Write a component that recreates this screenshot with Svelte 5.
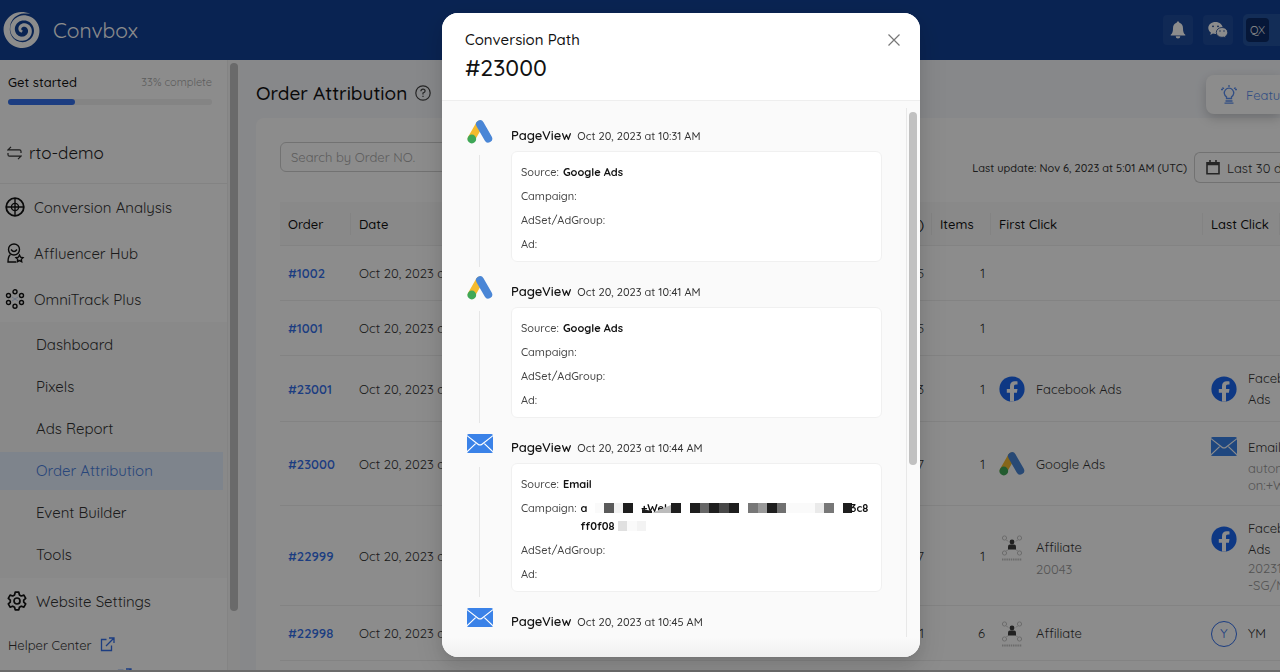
<script>
  const menu = [
    { label: 'Conversion Analysis', icon: 'target' },
    { label: 'Affluencer Hub', icon: 'person' },
    { label: 'OmniTrack Plus', icon: 'dots' },
  ]
  const submenu = ['Dashboard', 'Pixels', 'Ads Report', 'Order Attribution', 'Event Builder', 'Tools']

  const orders = [
    { id: '#1002', total: '5', items: 1 },
    { id: '#1001', total: '5', items: 1 },
    {
      id: '#23001', total: '3', items: 1,
      first: { icon: 'facebook', name: ['Facebook Ads'] },
      last: { icon: 'facebook', name: ['Facebook', 'Ads'] },
    },
    {
      id: '#23000', total: '7', items: 1,
      first: { icon: 'google', name: ['Google Ads'] },
      last: { icon: 'email', name: ['Email'], sub: ['automati', 'on:+Wel'] },
    },
    {
      id: '#22999', total: '7', items: 1,
      first: { icon: 'affiliate', name: ['Affiliate'], sub: ['20043'] },
      last: { icon: 'facebook', name: ['Facebook', 'Ads'], sub: ['20231', '-SG/MY'] },
    },
    {
      id: '#22998', total: '1', items: 6,
      first: { icon: 'affiliate', name: ['Affiliate'] },
      last: { icon: 'letter', name: ['YM'] },
    },
  ]

  const steps = [
    { icon: 'google', time: 'Oct 20, 2023 at 10:31 AM', source: 'Google Ads' },
    { icon: 'google', time: 'Oct 20, 2023 at 10:41 AM', source: 'Google Ads' },
    { icon: 'email', time: 'Oct 20, 2023 at 10:44 AM', source: 'Email', masked: true },
    { icon: 'email', time: 'Oct 20, 2023 at 10:45 AM', source: 'Email' },
  ]

  // [x, width, colour] of each tile that hides part of the campaign name
  const tiles = [
    [4, 9, '#fafafa'], [13, 10, '#5a5a5a'], [23, 9, '#f2f2f2'], [32, 10, '#1e1e1e'],
    [80, 10, '#1e1e1e'], [99, 10, '#1e1e1e'], [109, 9, '#666'], [118, 10, '#1e1e1e'],
    [128, 10, '#484848'], [138, 10, '#1e1e1e'], [157, 10, '#777'], [167, 9, '#999'],
    [176, 10, '#1e1e1e'], [186, 9, '#707070'], [195, 29, '#fafafa'], [224, 9, '#eaeaea'],
    [233, 10, '#777'], [252, 9, '#1e1e1e'],
  ]

  // logo: one band that winds inwards and gets thinner
  function spiral() {
    const outer = []
    const inner = []
    for (let i = 0; i <= 120; i++) {
      const t = i / 120
      const a = -1.15 - t * 2.5 * 2 * Math.PI
      const r = 17.4 - 16 * Math.pow(t, 1.3)
      const w = Math.min(6.8, t * 60) * (1 - 0.6 * t)
      outer.push([20 + (r + w / 2) * Math.cos(a), 20 + (r + w / 2) * Math.sin(a)])
      inner.unshift([20 + (r - w / 2) * Math.cos(a), 20 + (r - w / 2) * Math.sin(a)])
    }
    return 'M' + [...outer, ...inner].map((p) => p.map((n) => n.toFixed(2)).join(' ')).join('L') + 'Z'
  }
</script>

{#snippet channel(name)}
  {#if name === 'google'}
    <svg class="ch" viewBox="0 0 26 26" aria-hidden="true">
      <path d="M12.6 5.4 4.6 19.4" stroke="#f5bb2e" stroke-width="7.6" stroke-linecap="round" />
      <path d="M13 5.2 21.2 19.6" stroke="#4a86d6" stroke-width="8" stroke-linecap="round" />
      <circle cx="4.8" cy="20" r="4.4" fill="#3fa757" />
    </svg>
  {:else if name === 'email'}
    <svg class="ch" viewBox="0 0 26 26" aria-hidden="true">
      <rect x="0" y="3" width="26" height="19" rx="1.6" fill="#3a82e8" />
      <path d="M0 4.600 11 13.200q2 1.500 4 0L26 4.600M0 20.800 8.600 12.600M26 20.800 17.400 12.600" fill="none" stroke="#fff" stroke-width="1.200" />
    </svg>
  {:else if name === 'facebook'}
    <svg class="ch" viewBox="0 0 26 26" aria-hidden="true">
      <circle cx="13" cy="13" r="12.6" fill="#1a66f0" />
      <path d="M11 25.6v-8.9H7.8V13H11v-2.8c0-3.2 1.9-4.9 4.8-4.9 1.4 0 2.7.2 2.7.2v3.1H17c-1.6 0-2 .9-2 1.9V13h3.5l-.6 3.7H15v8.9z" fill="#fff" />
    </svg>
  {:else if name === 'affiliate'}
    <svg class="ch" viewBox="0 0 26 26" aria-hidden="true">
      <g fill="none" stroke="#c4c4c4" stroke-width="1">
        <circle cx="5.5" cy="3" r="2.1" /><circle cx="20.5" cy="3" r="2.1" />
        <circle cx="5.5" cy="18" r="2.1" /><circle cx="20.5" cy="18" r="2.1" />
        <path d="M7.5 5 9 6.500M18.5 5 17 6.500M7.500 16 9 14.500M18.500 16 17 14.500" />
        <path d="M3 24.500h20" stroke-width="2" stroke-dasharray="1.500 .7" />
      </g>
      <circle cx="13" cy="7" r="2.400" fill="#3c3c3c" />
      <path d="M9 14.500v-3q0-2 2-2h4q2 0 2 2v3z" fill="#3c3c3c" />
    </svg>
  {:else}
    <span class="ch letter">Y</span>
  {/if}
{/snippet}

{#snippet external()}
  <svg width="15" height="15" viewBox="0 0 15 15" fill="none" stroke="currentColor" stroke-width="1.3" aria-hidden="true">
    <path d="M6.5 2.500H1.500v11h10V8.500M9 1h5v5M14 1 6 9" />
  </svg>
{/snippet}

{#snippet click(c)}
  {#if c}
    <div class="click">
      {@render channel(c.icon)}
      <div>{#each c.name as line}<div>{line}</div>{/each}</div>
      {#if c.sub}
        <div class="sub">{#each c.sub as line}<div>{line}</div>{/each}</div>
      {/if}
    </div>
  {/if}
{/snippet}

<div class="page">
  <header class="topbar">
    <a class="brand" href="#home">
      <svg width="40" height="40" viewBox="0 0 40 40" aria-hidden="true"><path d={spiral()} fill="#fff" /></svg>
      Convbox
    </a>
    <div class="tools">
      <button class="tool" aria-label="Notifications">
        <svg width="18" height="18" viewBox="0 0 18 18" fill="#fff" aria-hidden="true">
          <path d="M9 .6c.8 0 1.3.5 1.3 1.2C12.8 2.500 14 4.600 14 7.200c0 3.500.6 5 2.300 6.600v.7H1.700v-.7C3.400 12.200 4 10.700 4 7.200c0-2.600 1.200-4.700 3.700-5.400C7.700 1.100 8.200.6 9 .6zM6.700 15.300h4.600a2.300 2.300 0 0 1-4.600 0z" />
        </svg>
      </button>
      <button class="tool" aria-label="WeChat">
        <svg width="20" height="18" viewBox="0 0 20 18" aria-hidden="true">
          <path d="M7.5 1C3.500 1 .3 3.600.3 7c0 1.900 1 3.500 2.600 4.600L2.300 14l2.600-1.400c.8.300 1.700.4 2.600.4 4 0 7.200-2.700 7.200-6S11.500 1 7.500 1z" fill="#fff" />
          <path d="M14 6.500c-3.200 0-5.700 2.200-5.700 4.900s2.500 4.900 5.700 4.900c.7 0 1.400-.1 2-.3l2 1.100-.5-1.900c1.400-.9 2.200-2.300 2.200-3.800 0-2.700-2.500-4.900-5.700-4.900z" fill="#fff" stroke="#17418f" stroke-width=".8" />
          <g fill="#17418f"><circle cx="5" cy="5.300" r=".9" /><circle cx="10" cy="5.300" r=".9" /><circle cx="12" cy="10" r=".7" /><circle cx="16" cy="10" r=".7" /></g>
        </svg>
      </button>
      <button class="user"><span>QX</span></button>
    </div>
  </header>

  <div class="body">
    <aside class="side">
      <nav class="side-content">
        <div class="start">
          <div class="start-head"><b>Get started</b><span>33% complete</span></div>
          <div class="bar" role="progressbar" aria-valuenow="33" aria-label="Get started"><i></i></div>
        </div>
        <button class="site">
          <svg width="15" height="14" viewBox="0 0 15 14" fill="none" stroke="#333" stroke-width="1.2" aria-hidden="true">
            <path d="M4 .8 1 3.800h11.500q1.500 0 1.500 1.500V7M11 13.200l3-3H2.500Q1 10.200 1 8.700V7" />
          </svg>
          rto-demo
        </button>
        {#each menu as m}
          <a class="item" href="#menu">
            <svg width="20" height="20" viewBox="0 0 20 20" fill="none" stroke="#111" stroke-width="1.4" aria-hidden="true">
              {#if m.icon === 'target'}
                <circle cx="10" cy="10" r="8.8" stroke-width="1.800" /><circle cx="10" cy="10" r="3.600" />
                <path d="M10 1v18M1 10h18" />
              {:else if m.icon === 'person'}
                <circle cx="9" cy="6.500" r="5.500" /><path d="M6 6.500q3 4 6 0M5.500 11.500Q3 13.500 3 19h8" />
                <path d="m14.500 12 1.100 2.200 2.400.4-1.700 1.700.4 2.400-2.200-1.100-2.200 1.100.4-2.400-1.700-1.700 2.400-.4z" />
              {:else}
                <circle cx="10" cy="2.800" r="2" /><circle cx="10" cy="17.200" r="2" />
                <circle cx="3.500" cy="6.500" r="2" /><circle cx="16.500" cy="6.500" r="2" />
                <circle cx="3.500" cy="13.500" r="2" /><circle cx="16.500" cy="13.500" r="2" />
                <path d="M7 8l6 4M7 12l6-4" stroke="#b9cdf0" stroke-width=".8" />
              {/if}
            </svg>
            {m.label}
          </a>
        {/each}
        <div class="submenu">
          {#each submenu as s}
            <a href="#sub" class:active={s === 'Order Attribution'}>{s}</a>
          {/each}
        </div>
        <a class="item settings" href="#settings">
          <svg width="20" height="20" viewBox="0 0 20 20" fill="none" stroke="#111" stroke-width="1.7" stroke-linejoin="round" aria-hidden="true">
            <path d="M8.200 1.200h3.600l.6 2.700 1.900 1.100 2.600-.9 1.800 3.200-2 1.800v2l2 1.800-1.800 3.200-2.600-.9-1.900 1.100-.6 2.600H8.200l-.6-2.600-1.900-1.100-2.600.9-1.800-3.200 2-1.800v-2l-2-1.800 1.800-3.200 2.600.9 1.900-1.100z" />
            <circle cx="10" cy="10" r="3" />
          </svg>
          Website Settings
        </a>
        <a class="help" href="#help">Helper Center {@render external()}</a>
        <a class="help more" href="#more" aria-label="More help">{@render external()}</a>
      </nav>
      <div class="track"><div class="thumb"></div></div>
    </aside>

    <main>
      <div class="title-row">
        <h1>Order Attribution</h1>
        <svg width="16" height="16" viewBox="0 0 16 16" fill="none" stroke="#444" stroke-width="1.2" aria-hidden="true">
          <circle cx="8" cy="8" r="7.2" /><path d="M5.900 6.300q0-2.200 2.100-2.200t2.100 1.900Q10.100 7.300 8 8v1.500M8 10.700v1.400" />
        </svg>
        <button class="feature">
          <svg width="16" height="19" viewBox="0 0 16 19" fill="none" stroke="currentColor" stroke-width="1.3" aria-hidden="true">
            <path d="M5.500 13.500v-1.600a4.700 4.700 0 1 1 5 0v1.600zM4.500 16h7M3.500 18.200h9M8 0v2M1.500 2.500l1.400 1.400M14.500 2.500l-1.400 1.400M0 4.500h2M14 4.500h2" />
          </svg>
          Feature Request
        </button>
      </div>
      <section class="card">
        <div class="filters">
          <input type="text" placeholder="Search by Order NO." aria-label="Search by Order NO." />
          <div class="period">
            <span class="update">Last update: Nov 6, 2023 at 5:01 AM (UTC)</span>
            <button class="range">
              <svg width="14" height="15" viewBox="0 0 14 15" fill="none" stroke="#444" stroke-width="1.6" aria-hidden="true">
                <path d="M1 2.800h12v11H1zM4 0v3M10 0v3" /><path d="M1 4h12" stroke-width="2.400" />
              </svg>
              Last 30 days
            </button>
          </div>
        </div>
        <table>
          <colgroup><col class="c-order" /><col /><col class="c-total" /><col class="c-items" /><col class="c-first" /><col class="c-last" /></colgroup>
          <thead>
            <tr><th>Order</th><th>Date</th><th class="num">Total (USD)</th><th>Items</th><th>First Click</th><th>Last Click</th></tr>
          </thead>
          <tbody>
            {#each orders as o}
              <tr>
                <td><a href="#order">{o.id}</a></td>
                <td>Oct 20, 2023 at 10:45 AM</td>
                <td class="num">{o.total}</td>
                <td class="num items">{o.items}</td>
                <td>{@render click(o.first)}</td>
                <td>{@render click(o.last)}</td>
              </tr>
            {/each}
          </tbody>
        </table>
      </section>
    </main>
  </div>
</div>

<div class="mask">
  <div class="modal" role="dialog" aria-modal="true" aria-labelledby="path-title">
    <div class="modal-head">
      <div>
        <h2 id="path-title">Conversion Path</h2>
        <p>#23000</p>
      </div>
      <button aria-label="Close">
        <svg width="12" height="12" viewBox="0 0 12 12" stroke="#777" stroke-width="1.2" aria-hidden="true"><path d="M.5.5l11 11M11.5.5l-11 11" /></svg>
      </button>
    </div>
    <div class="modal-body">
      <ol>
        {#each steps as s}
          <li>
            <div class="mark">{@render channel(s.icon)}</div>
            <div class="step">
              <div class="step-head"><b>PageView</b><span>{s.time}</span></div>
              <dl>
                <div><dt>Source:</dt><dd>{s.source}</dd></div>
                <div>
                  <dt>Campaign:</dt>
                  {#if s.masked}
                    <dd class="masked">
                      <div>
                        <span>a</span>
                        <svg width="261" height="12" viewBox="0 0 261 12" aria-hidden="true">
                          <text x="50" y="10">+Wel</text>
                          <path d="M51 11V7l10 4L80 3v8z" fill="#bbb" />
                          <path d="M51 11V7l10 2v2z" fill="#1e1e1e" />
                          {#each tiles as [x, w, fill]}<rect {x} y="1" width={w} height="10" {fill} />{/each}
                        </svg>
                        <span>3c8</span>
                      </div>
                      <div>
                        <span>ff0f08</span>
                        <svg width="28" height="10" viewBox="0 0 28 10" aria-hidden="true">
                          <rect width="9" height="10" fill="#e0e0e0" /><rect x="9" width="10" height="10" fill="#fafafa" /><rect x="19" width="9" height="10" fill="#f3f3f3" />
                        </svg>
                      </div>
                    </dd>
                  {/if}
                </div>
                <div><dt>AdSet/AdGroup:</dt></div>
                <div><dt>Ad:</dt></div>
              </dl>
            </div>
          </li>
        {/each}
      </ol>
      <div class="modal-track"><div class="modal-thumb"></div></div>
    </div>
    <div class="modal-foot"></div>
  </div>
</div>

<style>
  :global(body) {
    margin: 0;
    overflow: hidden;
  }
  .page,
  .mask {
    font-family: Quicksand, Lato, sans-serif;
    font-size: 13px;
    color: #333;
    box-sizing: border-box;
  }
  .page *,
  .mask * {
    box-sizing: border-box;
  }
  .page {
    height: 100vh;
    display: flex;
    flex-direction: column;
    overflow: hidden;
    background: #f6f8fc;
    border-bottom: 2px solid #c4c4c4;
  }
  button,
  input {
    font: inherit;
    color: inherit;
    border: 0;
    background: none;
    padding: 0;
  }
  a {
    color: inherit;
    text-decoration: none;
  }
  svg {
    display: block;
    flex: none;
  }
  b {
    font-weight: 600;
  }

  .topbar {
    flex: none;
    height: 60px;
    display: flex;
    align-items: center;
    justify-content: space-between;
    padding-left: 3px;
    background: #124196;
    color: #fff;
  }
  .brand {
    display: flex;
    align-items: center;
    gap: 10px;
    font-size: 21px;
  }
  .tools {
    display: flex;
    align-items: center;
    gap: 10px;
  }
  .tool {
    width: 30px;
    height: 30px;
    display: grid;
    place-items: center;
    border-radius: 4px;
    background: #1e4b9c;
  }
  .user {
    width: 37px;
    height: 32px;
    padding-left: 3px;
    border-radius: 5px 0 0 5px;
    background: #24529f;
  }
  .user span {
    display: grid;
    place-items: center;
    width: 23px;
    height: 24px;
    border-radius: 4px;
    background: #0b2a66;
    font-size: 11px;
  }

  .body {
    flex: 1;
    min-height: 0;
    display: flex;
  }
  .side {
    flex: none;
    width: 240px;
    display: flex;
    background: #fff;
    overflow: hidden;
  }
  .side-content {
    flex: 1;
    border-right: 1px solid #f0f0f0;
    font-size: 15px;
  }
  .track {
    width: 12px;
    padding: 3px 2px;
    background: #fafafa;
  }
  .thumb {
    height: 548px;
    border-radius: 4px;
    background: #c1c1c1;
  }
  .start {
    padding: 12px 15px 0 8px;
    height: 70px;
  }
  .start-head {
    display: flex;
    justify-content: space-between;
    align-items: center;
    line-height: 20px;
    font-size: 13px;
    color: #111;
  }
  .start-head b {
    font-weight: 500;
  }
  .start-head span {
    font-size: 11px;
    color: #aaa;
  }
  .bar {
    height: 6px;
    margin-top: 7px;
    border-radius: 3px;
    background: #f0f0f0;
  }
  .bar i {
    display: block;
    width: 33%;
    height: 6px;
    border-radius: 3px;
    background: #3370eb;
  }
  .site {
    width: 100%;
    height: 54px;
    padding: 0 7px 8px;
    display: flex;
    align-items: center;
    gap: 7px;
    border-bottom: 1px solid #eee;
    font-size: 17px;
    color: #222;
  }
  .item {
    height: 46px;
    padding-left: 5px;
    display: flex;
    align-items: center;
    gap: 9px;
  }
  .item.settings {
    padding-left: 7px;
  }
  .submenu {
    padding: 2px 0;
    background: #fafafa;
  }
  .submenu a {
    display: block;
    height: 38px;
    line-height: 38px;
    margin: 2px 4px 4px 0;
    padding-left: 36px;
  }
  .submenu a:last-child {
    margin-bottom: 2px;
  }
  .submenu a.active {
    background: #e6f0ff;
    color: #4a80e0;
  }
  .help {
    display: flex;
    align-items: center;
    gap: 8px;
    height: 31px;
    padding-left: 8px;
    font-size: 13px;
  }
  .help svg {
    color: #3370eb;
  }
  .settings + .help {
    margin-top: 5px;
  }
  .help.more {
    padding-left: 117px;
  }

  main {
    flex: 1;
    min-width: 0;
    overflow: hidden;
    padding-left: 16px;
  }
  .title-row {
    display: flex;
    align-items: center;
    gap: 8px;
    padding: 15px 0 4px;
  }
  h1 {
    margin: 0 0 3px;
    font-size: 19px;
    font-weight: 500;
    color: #111;
  }
  .title-row > svg {
    margin-bottom: 4px;
  }
  .feature {
    width: 74px;
    height: 39px;
    margin-left: auto;
    padding-left: 15px;
    display: flex;
    align-items: center;
    gap: 9px;
    overflow: hidden;
    white-space: nowrap;
    border-radius: 8px 0 0 8px;
    background: #fff;
    color: #5b8ff0;
    box-shadow: 0 4px 12px rgba(0, 0, 0, 0.2);
  }
  .card {
    height: 100%;
    padding: 24px 0 0 24px;
    border-radius: 8px 0 0 0;
    background: #fff;
  }
  .filters {
    display: flex;
    align-items: flex-start;
    justify-content: space-between;
    margin-bottom: 19px;
  }
  .filters input {
    width: 280px;
    height: 30px;
    padding: 0 10px;
    border: 1px solid #d0d0d0;
    border-radius: 6px;
  }
  .filters input::placeholder {
    color: #aaa;
    opacity: 1;
  }
  .period {
    display: flex;
    align-items: center;
    gap: 7px;
    padding-top: 10px;
  }
  .update {
    font-size: 11px;
    font-weight: 500;
  }
  .range {
    width: 86px;
    height: 31px;
    padding-left: 11px;
    display: flex;
    align-items: center;
    gap: 7px;
    overflow: hidden;
    white-space: nowrap;
    border: 1px solid #d0d0d0;
    border-right: 0;
    border-radius: 6px 0 0 6px;
  }
  table {
    width: 100%;
    table-layout: fixed;
    border-collapse: separate;
    border-spacing: 0;
    white-space: nowrap;
  }
  .c-order {
    width: 71px;
  }
  .c-total {
    width: 92px;
  }
  .c-items {
    width: 59px;
  }
  .c-first {
    width: 212px;
  }
  .c-last {
    width: 77px;
  }
  th {
    height: 44px;
    padding: 0 8px;
    text-align: left;
    font-weight: 500;
    color: #111;
    background: linear-gradient(#eee, #eee) right center / 1px 22px no-repeat #fafafa;
    border-bottom: 1px solid #eee;
  }
  th:last-child {
    padding-right: 0;
  }
  td {
    height: 55px;
    padding: 12px 8px 11px;
    line-height: 21px;
    border-bottom: 1px solid #eee;
  }
  td > a {
    color: #3370eb;
    font-weight: 600;
  }
  .num {
    text-align: right;
  }
  .items {
    padding-right: 6px;
  }
  .click {
    display: grid;
    grid-template-columns: 26px auto;
    column-gap: 11px;
    align-items: center;
  }
  .sub {
    grid-column: 2;
    line-height: 17px;
    color: #999;
  }
  /* single-line channels keep the row as low as a plain one */
  .click:not(:has(.sub)) {
    margin: -3px 0;
  }
  .click:not(:has(.sub)):has(div > div + div) {
    margin: 0;
  }
  .ch {
    width: 26px;
    height: 26px;
    fill: none;
  }
  .letter {
    display: grid;
    place-items: center;
    border: 1px solid #3370eb;
    border-radius: 50%;
    color: #3370eb;
  }

  .mask {
    position: fixed;
    inset: 0;
    display: flex;
    justify-content: center;
    padding: 13px 0 15px 82px;
    background: rgba(0, 0, 0, 0.45);
  }
  .modal {
    width: 478px;
    display: flex;
    flex-direction: column;
    overflow: hidden;
    border-radius: 16px;
    background: #fafafa;
    box-shadow: 0 6px 16px rgba(0, 0, 0, 0.08), 0 3px 6px -4px rgba(0, 0, 0, 0.12), 0 9px 28px 8px rgba(0, 0, 0, 0.08);
  }
  .modal-head {
    flex: none;
    height: 88px;
    padding: 16px 20px 0 23px;
    display: flex;
    justify-content: space-between;
    align-items: flex-start;
    background: #fff;
    border-bottom: 1px solid #eee;
    color: #111;
  }
  .modal-head h2 {
    margin: 0;
    font-size: 15px;
    font-weight: 500;
    line-height: 22px;
  }
  .modal-head p {
    margin: 0;
    font-size: 23px;
    font-weight: 500;
    line-height: 34px;
  }
  .modal-head button {
    padding: 5px 0;
  }
  .modal-body {
    flex: 1;
    min-height: 0;
    display: flex;
    overflow: hidden;
  }
  ol {
    flex: 1;
    margin: 0;
    padding: 18px 24px 0 25px;
    list-style: none;
  }
  li {
    display: flex;
    gap: 18px;
    padding-bottom: 13px;
  }
  .mark {
    width: 26px;
    display: flex;
    flex-direction: column;
    gap: 10px;
  }
  .mark::after {
    content: '';
    flex: 1;
    width: 1px;
    margin: 0 0 -5px 12px;
    background: #e6e6e6;
  }
  .step {
    flex: 1;
  }
  .step-head {
    display: flex;
    align-items: baseline;
    gap: 6px;
    height: 32px;
    line-height: 32px;
    font-size: 11px;
    font-weight: 500;
  }
  .step-head b {
    font-size: 13px;
    color: #111;
  }
  dl {
    margin: 0;
    padding: 8px 9px 5px;
    border: 1px solid #f0f0f0;
    border-radius: 6px;
    background: #fff;
    font-size: 11px;
    line-height: 24px;
  }
  dl > div {
    display: flex;
    gap: 4px;
  }
  dt {
    font-weight: 500;
    color: #444;
  }
  dd {
    margin: 0;
    font-weight: 700;
    color: #111;
  }
  .masked {
    padding: 3px 0;
    line-height: 18px;
  }
  .masked div {
    display: flex;
    align-items: center;
    gap: 3px;
  }
  .masked span:last-child {
    margin-left: -4px;
  }
  .masked text {
    font-size: 11px;
    fill: #111;
  }
  .modal-track {
    width: 14px;
    margin-top: 7px;
    padding: 4px 3px 0 2px;
    border-left: 1px solid #e8e8e8;
  }
  .modal-thumb {
    height: 353px;
    border-radius: 4px;
    background: #c1c1c1;
  }
  .modal-foot {
    flex: none;
    height: 20px;
    background: linear-gradient(#fafafa, #f0f0f0);
  }
</style>
